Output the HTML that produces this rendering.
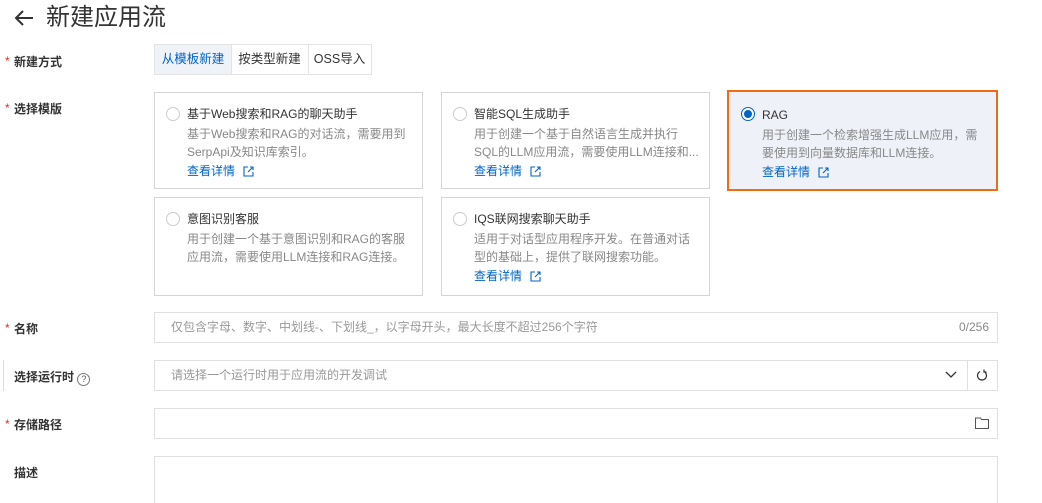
<!DOCTYPE html>
<html style="overflow:hidden;height:503px"><head><meta charset="utf-8"><style>
body{margin:0;width:1042px;height:503px;overflow:hidden;background:#fff;font-family:"Liberation Sans","Noto Sans CJK SC",sans-serif;color:#333;font-size:12px;position:relative}
.a{position:absolute}
.lbl{position:absolute;left:14px;font-weight:bold;font-size:12px;color:#333}
.star{position:absolute;left:5px;color:#d93026;font-size:12px}
.seg{position:absolute;top:44px;height:31px;border:1px solid #e3e3e3;box-sizing:border-box;line-height:29px;text-align:center;font-size:12.5px;color:#333}
.card{position:absolute;width:269px;height:97px;border:1px solid #d5d5d5;box-sizing:border-box;background:#fff}
.card .r{position:absolute;left:11px;top:14px;width:12px;height:12px;border:1px solid #ccc;border-radius:50%}
.card .t{position:absolute;left:32px;top:13px;font-size:12px;color:#333;line-height:16px}
.card .d{position:absolute;left:32px;top:32px;width:225px;color:#888;line-height:18px;font-size:12px}
.card .l{position:absolute;left:32px;top:70px;color:#0064c8;font-size:12px;line-height:16px}
.ext{display:inline-block;vertical-align:-2px;margin-left:8px}
.inp{position:absolute;left:154px;width:844px;height:31px;border:1px solid #e0e0e0;box-sizing:border-box;color:#999;line-height:29px;padding-left:16px;font-size:12px}
</style></head><body>
<svg class="a" style="left:13px;top:9px" width="22" height="18" viewBox="0 0 22 18"><path d="M20 9H3M10 2L3 9l7 7" fill="none" stroke="#333" stroke-width="2"/></svg>
<div class="a" style="left:46px;top:2px;font-size:24px;color:#333;line-height:32px">新建应用流</div>

<span class="star" style="top:54px">*</span><span class="lbl" style="top:53px">新建方式</span>
<div class="seg" style="left:154px;width:78px;background:#eff3f8;color:#0064c8">从模板新建</div>
<div class="seg" style="left:231px;width:78px;border-left:none">按类型新建</div>
<div class="seg" style="left:308px;width:64px;border-left:none">OSS导入</div>

<span class="star" style="top:101px">*</span><span class="lbl" style="top:100px">选择模版</span>

<div class="card" style="left:154px;top:92px"><div class="r"></div><div class="t">基于Web搜索和RAG的聊天助手</div><div class="d">基于Web搜索和RAG的对话流，需要用到SerpApi及知识库索引。</div><div class="l">查看详情<svg class="ext" width="11" height="11" viewBox="0 0 11 11"><path d="M5 1H1v9h9V6M7 1h3v3M10 1L5 6" fill="none" stroke="#0064c8" stroke-width="1.1"/></svg></div></div>
<div class="card" style="left:441px;top:92px"><div class="r"></div><div class="t">智能SQL生成助手</div><div class="d">用于创建一个基于自然语言生成并执行SQL的LLM应用流，需要使用LLM连接和...</div><div class="l">查看详情<svg class="ext" width="11" height="11" viewBox="0 0 11 11"><path d="M5 1H1v9h9V6M7 1h3v3M10 1L5 6" fill="none" stroke="#0064c8" stroke-width="1.1"/></svg></div></div>
<div class="card" style="left:727px;top:90px;width:271px;height:101px;border:2px solid #f26b0f;background:#eef1f7"><div class="r" style="left:12px;top:15px;border-color:#0064c8;background:#fff"><div style="position:absolute;left:2px;top:2px;width:8px;height:8px;border-radius:50%;background:#0064c8"></div></div><div class="t" style="left:33px;top:15px">RAG</div><div class="d" style="left:33px;top:34px">用于创建一个检索增强生成LLM应用，需要使用到向量数据库和LLM连接。</div><div class="l" style="left:33px;top:72px">查看详情<svg class="ext" width="11" height="11" viewBox="0 0 11 11"><path d="M5 1H1v9h9V6M7 1h3v3M10 1L5 6" fill="none" stroke="#0064c8" stroke-width="1.1"/></svg></div></div>
<div class="card" style="left:154px;top:197px;height:99px"><div class="r"></div><div class="t">意图识别客服</div><div class="d">用于创建一个基于意图识别和RAG的客服应用流，需要使用LLM连接和RAG连接。</div></div>
<div class="card" style="left:441px;top:197px;height:99px"><div class="r"></div><div class="t">IQS联网搜索聊天助手</div><div class="d">适用于对话型应用程序开发。在普通对话型的基础上，提供了联网搜索功能。</div><div class="l">查看详情<svg class="ext" width="11" height="11" viewBox="0 0 11 11"><path d="M5 1H1v9h9V6M7 1h3v3M10 1L5 6" fill="none" stroke="#0064c8" stroke-width="1.1"/></svg></div></div>

<span class="star" style="top:321px">*</span><span class="lbl" style="top:320px">名称</span>
<div class="inp" style="top:312px">仅包含字母、数字、中划线-、下划线_，以字母开头，最大长度不超过256个字符<span style="position:absolute;right:8px;color:#888">0/256</span></div>

<div class="a" style="left:0;top:360px;width:3px;height:31px;border-right:1px solid #ddd"></div>
<span class="lbl" style="top:368px">选择运行时 <span style="display:inline-block;width:11px;height:11px;border:1px solid #777;border-radius:50%;font-size:9px;line-height:11px;text-align:center;font-weight:normal;color:#555;vertical-align:-1px">?</span></span>
<div class="inp" style="top:360px">请选择一个运行时用于应用流的开发调试
<svg style="position:absolute;left:790px;top:10px" width="12" height="8" viewBox="0 0 12 8"><path d="M1 1l5 5 5-5" fill="none" stroke="#333" stroke-width="1.3"/></svg>
<div style="position:absolute;left:812px;top:0;width:1px;height:29px;background:#e0e0e0"></div>
<svg style="position:absolute;left:821px;top:8px" width="12" height="13" viewBox="0 0 12 13"><path d="M4 2.5A4.5 4.5 0 1 0 8 2.5M8 0.5v2.5h2.5" fill="none" stroke="#333" stroke-width="1.2"/></svg>
</div>

<span class="star" style="top:417px">*</span><span class="lbl" style="top:416px">存储路径</span>
<div class="inp" style="top:408px"><svg style="position:absolute;right:8px;top:8px" width="14" height="12" viewBox="0 0 14 12"><path d="M0.5 1h5l1 1.5h7v9h-13z" fill="none" stroke="#555" stroke-width="1"/></svg></div>

<span class="lbl" style="top:464px">描述</span>
<div class="inp" style="top:456px;height:47px;border-bottom:none"></div>
</body></html>
